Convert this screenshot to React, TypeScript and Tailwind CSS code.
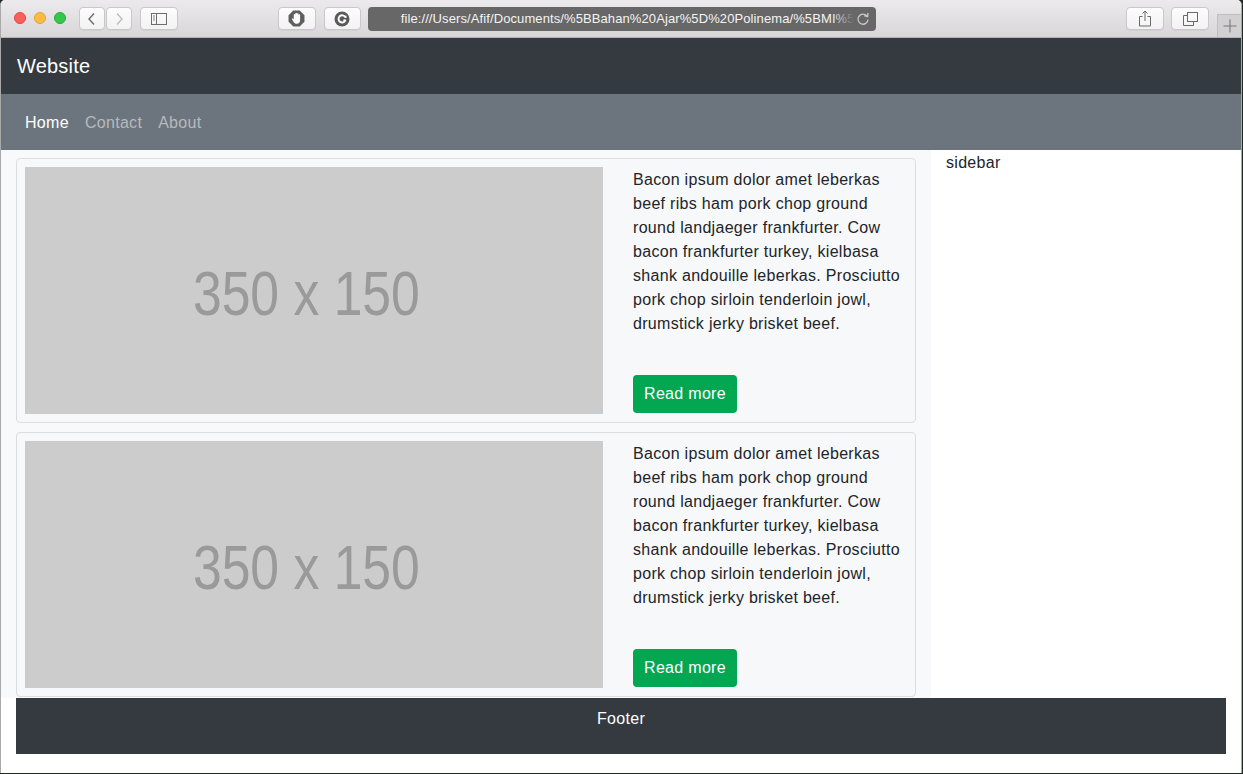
import React from "react";

const font = { fontFamily: '"Liberation Sans", Arial, sans-serif' };

function ChromeButton({ className = "", children }: { className?: string; children?: React.ReactNode }) {
  return (
    <div
      className={
        "flex h-[23px] items-center justify-center rounded-[4px] border border-[#c9c7c9] bg-gradient-to-b from-[#fdfdfd] to-[#f2f2f2] shadow-[0_1px_0_rgba(0,0,0,0.04)] " +
        className
      }
    >
      {children}
    </div>
  );
}

function TitleBar() {
  return (
    <div className="relative flex h-[38px] shrink-0 items-start border-b border-[#b4b2b4] bg-gradient-to-b from-[#eceaec] to-[#d8d6d8]">
      <div className="ml-[13px] mt-[12px] flex gap-[8px]">
        <div className="h-[12px] w-[12px] rounded-full border border-[#e0443e] bg-[#fc605c]" />
        <div className="h-[12px] w-[12px] rounded-full border border-[#dea236] bg-[#fdbc40]" />
        <div className="h-[12px] w-[12px] rounded-full border border-[#27aa35] bg-[#34c84a]" />
      </div>
      <div className="ml-[13px] mt-[7px] flex gap-[1px]">
        <ChromeButton className="w-[26px]">
          <svg width="10" height="14" viewBox="0 0 10 14">
            <path d="M7 1.5 L2 7 L7 12.5" fill="none" stroke="#6c6c6c" strokeWidth="1.4" />
          </svg>
        </ChromeButton>
        <ChromeButton className="w-[26px]">
          <svg width="10" height="14" viewBox="0 0 10 14">
            <path d="M3 1.5 L8 7 L3 12.5" fill="none" stroke="#bdbdbd" strokeWidth="1.4" />
          </svg>
        </ChromeButton>
      </div>
      <ChromeButton className="ml-[8px] mt-[7px] w-[38px]">
        <svg width="16" height="12" viewBox="0 0 16 12">
          <rect x="0.5" y="0.5" width="15" height="11" fill="none" stroke="#6e6e6e" />
          <line x1="5.5" y1="0.5" x2="5.5" y2="11.5" stroke="#6e6e6e" />
          <line x1="2" y1="3" x2="4" y2="3" stroke="#8a8a8a" />
          <line x1="2" y1="5" x2="4" y2="5" stroke="#8a8a8a" />
          <line x1="2" y1="7" x2="4" y2="7" stroke="#8a8a8a" />
        </svg>
      </ChromeButton>
      <ChromeButton className="ml-[100px] mt-[7px] w-[38px]">
        <svg width="17" height="17" viewBox="0 0 16 16">
          <path d="M5 0.5 H11 L15.5 5 V11 L11 15.5 H5 L0.5 11 V5 Z" fill="#5f5f5f" />
          <path
            d="M5.4 9 V4.6 a0.75 0.75 0 0 1 1.5 0 V3.4 a0.75 0.75 0 0 1 1.5 0 V3.8 a0.75 0.75 0 0 1 1.5 0 V4.8 a0.75 0.75 0 0 1 1.5 0 V9.4 C11.4 11.8 10.2 13 8.3 13 C6.6 13 5.7 12 4.7 10.3 L3.8 8.9 C3.4 8.2 4.3 7.6 4.9 8.3 Z"
            fill="#ffffff"
          />
        </svg>
      </ChromeButton>
      <ChromeButton className="ml-[8px] mt-[7px] w-[37px]">
        <svg width="16" height="16" viewBox="0 0 16 16">
          <circle cx="8" cy="8" r="7.5" fill="#5a5a5a" />
          <path d="M11.3 6.2 A3.6 3.6 0 1 0 11.5 9.2" fill="none" stroke="#ffffff" strokeWidth="1.9" />
          <path d="M9.4 9.2 H11.8" stroke="#ffffff" strokeWidth="1.6" />
          <path d="M11.8 4.8 V7" stroke="#ffffff" strokeWidth="1.4" />
        </svg>
      </ChromeButton>
      <div className="relative ml-[7px] mt-[7px] flex h-[24px] w-[508px] items-center rounded-[4px] bg-[#676767]">
        <div
          className="ml-[33px] whitespace-nowrap text-[13px] leading-[24px] tracking-[0.1px] text-[#f4f4f4]"
          style={font}
        >
          file:///Users/Afif/Documents/%5BBahan%20Ajar%5D%20Polinema/%5BMI%5D
        </div>
        <div className="absolute left-[464px] top-0 h-[24px] w-[44px] rounded-r-[4px] bg-[linear-gradient(to_right,rgba(103,103,103,0),#676767_50%)]" />
        <svg className="absolute left-[488px] top-[5px]" width="14" height="14" viewBox="0 0 14 14">
          <path d="M11 4.2 A5 5 0 1 0 12 7.5" fill="none" stroke="#c9c9c9" strokeWidth="1.3" />
          <path d="M8.2 3.6 L11.6 4.6 L12 1" fill="none" stroke="#c9c9c9" strokeWidth="1.3" />
        </svg>
      </div>
      <ChromeButton className="ml-[252px] mt-[7px] w-[38px]">
        <svg width="14" height="17" viewBox="0 0 14 17">
          <path d="M4.5 6.5 H1.5 V16 H12.5 V6.5 H9.5" fill="none" stroke="#6a6a6a" />
          <path d="M7 11 V1 M4.5 3.5 L7 1 L9.5 3.5" fill="none" stroke="#6a6a6a" />
        </svg>
      </ChromeButton>
      <ChromeButton className="ml-[7px] mt-[7px] w-[38px]">
        <svg width="15" height="14" viewBox="0 0 15 14">
          <rect x="4.5" y="0.5" width="10" height="9" fill="none" stroke="#6a6a6a" />
          <path d="M4.5 3.5 H0.5 V13.5 H10.5 V9.5" fill="none" stroke="#6a6a6a" />
        </svg>
      </ChromeButton>
      <div className="ml-[8px] mt-[14px] flex h-[23px] w-[24px] items-center justify-center border-l border-t border-[#bfbdbf] bg-[#d2d0d2]">
        <svg width="14" height="14" viewBox="0 0 14 14">
          <path d="M7 0.5 V13.5 M0.5 7 H13.5" stroke="#7a7a7a" strokeWidth="1.1" />
        </svg>
      </div>
    </div>
  );
}

function Placeholder() {
  return (
    <div className="flex h-[247px] w-[578px] shrink-0 items-center justify-center overflow-hidden bg-[#cccccc]">
      <span
        className="mr-[16px] mt-[6px] inline-block scale-x-[0.82] whitespace-nowrap text-[63px] leading-none tracking-normal text-[#9a9a9a]"
        style={font}
      >
        350 x 150
      </span>
    </div>
  );
}

function Card() {
  return (
    <div className="flex rounded-[4px] border border-[#dcdddf] bg-[#f7f8f9] p-[8px]">
      <Placeholder />
      <div className="ml-[30px] flex flex-1 flex-col justify-between">
        <p className="pt-[1px] text-[16px] leading-[24px] text-[#212529]">
          Bacon ipsum dolor amet leberkas beef ribs ham pork chop ground round landjaeger frankfurter. Cow bacon
          frankfurter turkey, kielbasa shank andouille leberkas. Prosciutto pork chop sirloin tenderloin jowl,
          drumstick jerky brisket beef.
        </p>
        <div className="flex">
          <button className="mb-[1px] h-[38px] w-[104px] rounded-[4px] bg-[#03a651] text-[16px] leading-[24px] text-white">
            Read more
          </button>
        </div>
      </div>
    </div>
  );
}

export default function App() {
  return (
    <div className="h-[774px] w-[1243px] overflow-hidden bg-[#1e2b25]" style={font}>
      <div className="flex h-[773px] w-[1242px] flex-col overflow-hidden rounded-t-[5px] border-l border-r border-[#a9a9a9] bg-white tracking-[0.3px]">
        <TitleBar />
        <div className="flex h-[56px] shrink-0 items-center bg-[#343a40] px-[16px]">
          <span className="text-[20px] leading-[30px] tracking-[0.2px] text-white">Website</span>
        </div>
        <div className="flex h-[56px] shrink-0 items-center bg-[#6c757d] px-[16px] pt-[2px]">
          <a className="px-[8px] text-[16px] leading-[24px] text-white">Home</a>
          <a className="px-[8px] text-[16px] leading-[24px] text-[#b6babe]">Contact</a>
          <a className="px-[8px] text-[16px] leading-[24px] text-[#b6babe]">About</a>
        </div>
        <div className="flex">
          <div className="flex w-[930px] flex-col gap-[9px] bg-[#f8f9fa] px-[15px] pb-[1px] pt-[8px]">
            <Card />
            <Card />
          </div>
          <div className="flex-1 bg-white px-[15px] pt-[1px]">
            <p className="text-[16px] leading-[24px] text-[#212529]">sidebar</p>
          </div>
        </div>
        <div className="mx-[15px] flex h-[56px] justify-center bg-[#343a40] pt-[9px]">
          <span className="text-[16px] leading-[24px] text-white">Footer</span>
        </div>
      </div>
    </div>
  );
}
